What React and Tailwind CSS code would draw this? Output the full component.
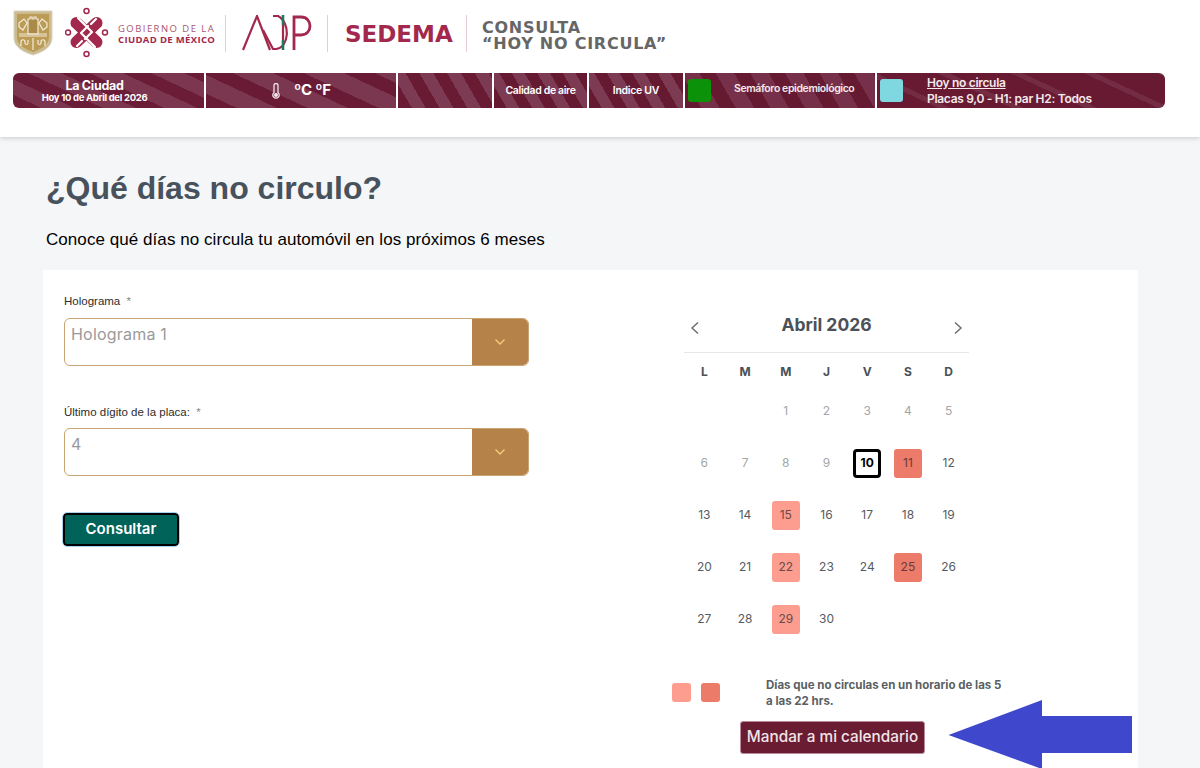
import React from "react";

const Crest = () => (
  <svg width="40" height="46" viewBox="0 0 40 46" className="block">
    <path d="M1 1H39V28C39 37 30 42 20 45C10 42 1 37 1 28Z" fill="#cdbb90" stroke="#d9d4c4" strokeWidth="1" />
    <path d="M4 4H36V27C36 35 28 39 20 42C12 39 4 35 4 27Z" fill="#bb9b56" />
    <g fill="none" stroke="#f3ecd8" strokeWidth="1.2">
      <path d="M15 24V9H17V7H19V9H21V7H23V9H25V24Z" fill="#a98a49" />
      <path d="M6 13L11 9L14 13L10 20L6 17Z" />
      <path d="M34 13L29 9L26 13L30 20L34 17Z" />
      <path d="M6 24H34M6 26H34" />
      <path d="M8 36V32C8 29 12 29 12 32V33C12 35 15 35 15 33V30" />
      <path d="M32 36V32C32 29 28 29 28 32V33C28 35 25 35 25 33V30" />
      <path d="M20 28V40" />
    </g>
  </svg>
);

const CdmxLogo = () => (
  <svg width="44" height="52" viewBox="0 0 44 52" className="block">
    <g fill="none" stroke="#a3284d" strokeWidth="1.5">
      <circle cx="21.5" cy="4" r="2.5" />
      <circle cx="21.5" cy="47" r="2.5" />
      <circle cx="3" cy="25.5" r="2.5" />
      <circle cx="40" cy="25.5" r="2.5" />
    </g>
    <g fill="none" stroke="#a3284d" strokeWidth="12" strokeLinecap="round">
      <path d="M11.5 16L31.5 35" />
      <path d="M31.5 16L11.5 35" />
    </g>
    <g fill="none" stroke="#ffffff" strokeWidth="2.2" strokeLinecap="round" strokeLinejoin="round">
      <path d="M13 11L27 25L20 32" />
      <path d="M30 40L16 26L23 19" />
      <path d="M31 12L26 17" />
      <path d="M12 39L17 34" />
    </g>
  </svg>
);

const AdipLogo = () => (
  <svg width="70" height="36" viewBox="0 0 70 36" className="block">
    <g fill="none" stroke="#a3284d" strokeWidth="2.2">
      <path d="M1 35L15 1L28 35" />
      <path d="M21 15L31 34H34C47 33 49 8 36 1H31" />
    </g>
    <path d="M41 0V10M41 25V35" stroke="#1f7a5c" strokeWidth="2.6" />
    <path d="M41 10V25" stroke="#a3284d" strokeWidth="2.2" />
    <path d="M52 35V2H59C71 2 71 20 59 20H52" fill="none" stroke="#a3284d" strokeWidth="2.8" />
  </svg>
);

const Divider = () => <div className="w-px h-[37px] bg-[#e6ccd3] shrink-0" />;

const Days = [
  ["", "", "1", "2", "3", "4", "5"],
  ["6", "7", "8", "9", "10", "11", "12"],
  ["13", "14", "15", "16", "17", "18", "19"],
  ["20", "21", "22", "23", "24", "25", "26"],
  ["27", "28", "29", "30", "", "", ""],
];
const light = ["15", "22", "29"];
const dark = ["11", "25"];
const muted = ["1", "2", "3", "4", "5", "6", "7", "8", "9"];

const Day = ({ d }) => {
  if (!d) return <div className="h-[52px]" />;
  let cls = "text-[#555b60]";
  if (muted.includes(d)) cls = "text-[#a3a6a9]";
  if (light.includes(d)) cls = "bg-[#fd9d8f] text-[#6a4a48] rounded-[3px]";
  if (dark.includes(d)) cls = "bg-[#ed7b6a] text-[#6a3a36] rounded-[3px]";
  if (d === "10") cls = "border-[3px] border-black rounded-[4px] text-black font-bold";
  return (
    <div className="h-[52px] flex items-center justify-center">
      <div className={`w-[28px] h-[29px] flex items-center justify-center text-[12px] ${cls}`}>{d}</div>
    </div>
  );
};

const Select = ({ value }) => (
  <div className="flex h-[48px] w-[465px] rounded-[6px] border border-[#cba473] overflow-hidden bg-white">
    <div className="flex-1 px-[6px] pt-[4px] text-[16px] leading-[22px] text-[#9a9a9a] tracking-[0.2px]">{value}</div>
    <div className="w-[56px] bg-[#b5834a] flex items-center justify-center">
      <svg width="12" height="8" viewBox="0 0 12 8" fill="none" stroke="#f3cf7e" strokeWidth="1.3"><path d="M1.5 1.5L6 6L10.5 1.5" /></svg>
    </div>
  </div>
);

const seg = "h-[35px] flex items-center justify-center text-white shrink-0";

export default function App() {
  return (
    <div className="relative h-[768px] overflow-hidden bg-[#f5f6f8] font-['Inter',sans-serif]">
      <header className="h-[137px] bg-white shadow-[0_1px_5px_rgba(0,0,0,0.18)] px-[13px] pt-[8px]">
        <div className="flex items-center h-[50px]">
          <div><Crest /></div>
          <div className="ml-[12px]"><CdmxLogo /></div>
          <div className="ml-[9px] w-[107px] font-['Open_Sans',sans-serif] text-[#a3284d] leading-[11px] whitespace-nowrap pt-[2px]">
            <div className="text-[9.5px] tracking-[1.45px] text-[#a8566f]">GOBIERNO DE LA</div>
            <div className="text-[9.5px] font-bold tracking-[0.35px]">CIUDAD DE MÉXICO</div>
          </div>
          <Divider />
          <div className="ml-[16px]"><AdipLogo /></div>
          <div className="ml-[15px]"><Divider /></div>
          <div className="ml-[17px] w-[121px] text-[23px] font-bold font-['DejaVu_Sans',sans-serif] text-[#a3284d] leading-none pt-[3px] whitespace-nowrap">SEDEMA</div>
          <Divider />
          <div className="ml-[15px] pt-[1px] text-[16px] leading-[19px] font-bold text-[#666666] font-['DejaVu_Sans',sans-serif] tracking-[0.75px] whitespace-nowrap">
            <div className="h-[16px]">CONSULTA</div>
            <div className="h-[16px]">“HOY NO CIRCULA”</div>
          </div>
        </div>
        <div className="flex mt-[15px] gap-[2px] w-[1152px] rounded-[6px] overflow-hidden">
          <div className={`${seg} w-[191px] flex-col pr-[28px] bg-[repeating-linear-gradient(25deg,#6b1c37_0_12px,#7d3650_12px_26px)]`}>
            <div className="text-[12.5px] font-bold leading-[13px] tracking-[-0.3px]">La Ciudad</div>
            <div className="text-[9.5px] font-bold leading-[11px] tracking-[-0.3px]">Hoy 10 de Abril del 2026</div>
          </div>
          <div className={`${seg} w-[190px] gap-[13px] bg-[repeating-linear-gradient(25deg,#691b35_0_13px,#7c3750_13px_30px)]`}>
            <svg width="10" height="16" viewBox="0 0 10 16" fill="none" stroke="#f2e5e8" strokeWidth="1.3"><path d="M3 9.5V2.5a2 2 0 0 1 4 0v7a3.2 3.2 0 1 1-4 0Z" /><circle cx="5" cy="12" r="1.4" fill="#f2e5e8" /></svg>
            <span className="text-[15px] font-bold tracking-[-0.2px]">ºC ºF</span>
          </div>
          <div className={`${seg} w-[94px] bg-[repeating-linear-gradient(60deg,#6a1b34_0_12px,#7d3a53_12px_24px)]`} />
          <div className={`${seg} w-[93px] bg-[repeating-linear-gradient(60deg,#651a31_0_11px,#7d3a53_11px_22px)] text-[10.5px] font-semibold tracking-[-0.35px] text-[#f4e9eb]`}>Calidad de aire</div>
          <div className={`${seg} w-[94px] bg-[repeating-linear-gradient(60deg,#651a31_0_11px,#7d3a53_11px_22px)] text-[10.5px] font-semibold tracking-[-0.3px] text-[#f4e9eb]`}>Indice UV</div>
          <div className={`${seg} w-[190px] justify-start pl-[3px] bg-[repeating-linear-gradient(60deg,#651a31_0_14px,#763049_14px_30px)]`}>
            <div className="w-[23px] h-[23px] rounded-[3px] bg-[#0c9208]" />
            <span className="ml-[23px] mb-[3px] text-[10.5px] font-semibold tracking-[-0.4px] text-[#f4e9eb]">Semáforo epidemiológico</span>
          </div>
          <div className={`${seg} flex-1 justify-start pl-[3px] bg-[repeating-linear-gradient(25deg,#671a32_0_26px,#742c45_26px_31px)]`}>
            <div className="w-[23px] h-[23px] rounded-[3px] bg-[#7fd8e0]" />
            <div className="ml-[24px] text-[12px] leading-[16px] font-semibold text-[#f4e9eb] tracking-[-0.3px] whitespace-nowrap">
              <div className="underline">Hoy no circula</div>
              <div>Placas 9,0 - H1: par H2: Todos</div>
            </div>
          </div>
        </div>
      </header>

      <main className="pl-[43px] pr-[62px]">
        <h1 className="ml-[3px] mt-[31px] text-[32px] leading-[40px] font-bold text-[#47525c] font-['Liberation_Sans',sans-serif]">¿Qué días no circulo?</h1>
        <p className="ml-[3px] mt-[21px] text-[17px] leading-[22px] tracking-[0.06px] text-black font-['Liberation_Sans',sans-serif]">Conoce qué días no circula tu automóvil en los próximos 6 meses</p>
        <section className="mt-[19px] h-[520px] bg-white flex">
          <div className="w-[641px] pl-[21px] pt-[24px]">
            <label className="block text-[11.5px] leading-[15px] text-[#2c2c2c] font-['Liberation_Sans',sans-serif]">Holograma <span className="ml-[3px] text-[#888]">*</span></label>
            <div className="mt-[9px]"><Select value="Holograma 1" /></div>
            <label className="block mt-[39px] text-[11.5px] leading-[15px] text-[#2c2c2c] font-['Liberation_Sans',sans-serif]">Último dígito de la placa: <span className="ml-[3px] text-[#888]">*</span></label>
            <div className="mt-[8px]"><Select value="4" /></div>
            <button className="mt-[37px] -ml-[1px] w-[116px] h-[33px] rounded-[4px] bg-[#00635a] border-2 border-black outline outline-1 outline-[#a9d3ee] text-white text-[15px] font-semibold">Consultar</button>
          </div>
          <div className="w-[285px]">
            <div className="h-[83px] border-b border-[#e4e6e8] flex items-start justify-between px-[6px] pt-[43px]">
              <svg width="10" height="14" viewBox="0 0 10 14" fill="none" stroke="#666b70" strokeWidth="1.4" className="mt-[8px]"><path d="M8 1.5L2 7L8 12.5" /></svg>
              <span className="text-[17.5px] leading-[24px] font-bold text-[#4b5157]">Abril 2026</span>
              <svg width="10" height="14" viewBox="0 0 10 14" fill="none" stroke="#666b70" strokeWidth="1.4" className="mt-[8px]"><path d="M2 1.5L8 7L2 12.5" /></svg>
            </div>
            <div className="grid grid-cols-7 h-[37px] items-center text-center text-[12px] font-bold text-[#4b5157]">
              {["L", "M", "M", "J", "V", "S", "D"].map((d, i) => <div key={i}>{d}</div>)}
            </div>
            <div className="grid grid-cols-7 -mt-[5px]">
              {Days.flat().map((d, i) => <Day key={i} d={d} />)}
            </div>
            <div className="flex mt-[32px] -ml-[12px] items-start">
              <div className="flex gap-[10px] mt-[6px] shrink-0">
                <div className="w-[19px] h-[19px] rounded-[3px] bg-[#fd9d8f]" />
                <div className="w-[19px] h-[19px] rounded-[3px] bg-[#ed7b6a]" />
              </div>
              <div className="ml-[46px] w-[238px] shrink-0 text-[11.5px] leading-[16px] font-bold text-[#5a5f64]">Días que no circulas en un horario de las 5 a las 22 hrs.</div>
            </div>
            <button className="block mt-[12px] ml-[56px] w-[185px] h-[33px] rounded-[3px] bg-[#691c32] border border-[#b98b99] text-[15.3px] font-medium text-[#f3e4e7] whitespace-nowrap">Mandar a mi calendario</button>
          </div>
        </section>
      </main>

      <svg width="186" height="70" viewBox="0 0 186 70" className="absolute left-[947px] top-[699px]">
        <path d="M1.5 36L95 1V17H185V54H95V70Z" fill="#3f48cc" />
      </svg>
    </div>
  );
}
